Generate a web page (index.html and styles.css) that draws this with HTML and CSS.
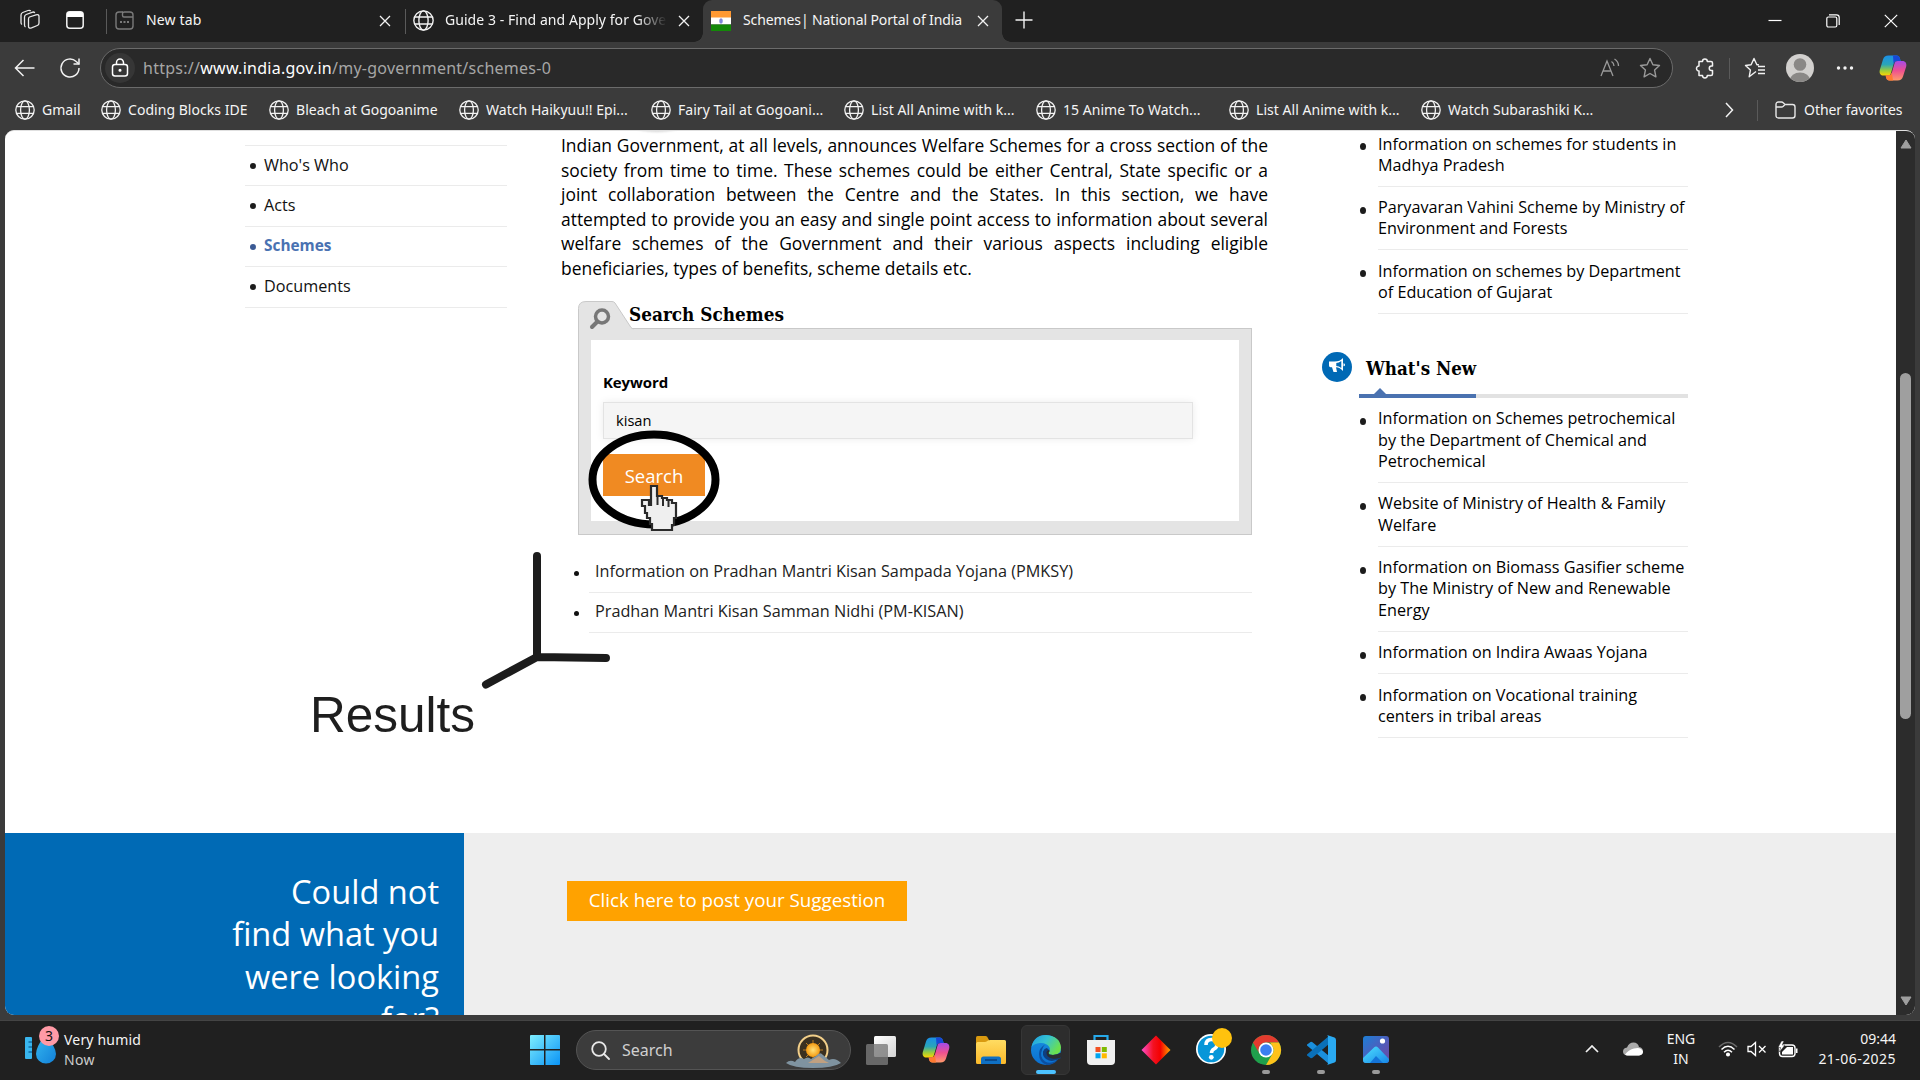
FILE: index.html
```html
<!DOCTYPE html>
<html lang="en">
<head>
<meta charset="utf-8">
<title>Schemes| National Portal of India</title>
<link rel="stylesheet" href="styles.css">
</head>
<body>
<svg class="defs" width="0" height="0">
  <defs>
    <linearGradient id="cpA" x1="0" y1="0" x2="0" y2="1"><stop offset="0" stop-color="#1b8fe8"/><stop offset=".45" stop-color="#2aa6b8"/><stop offset=".75" stop-color="#9ccc3c"/><stop offset="1" stop-color="#ffd500"/></linearGradient>
    <linearGradient id="cpB" x1="0" y1="0" x2="0" y2="1"><stop offset="0" stop-color="#a44bea"/><stop offset=".5" stop-color="#ee5090"/><stop offset="1" stop-color="#ff9a6a"/></linearGradient>
    <linearGradient id="edA" x1="0" y1="0" x2="1" y2=".5"><stop offset="0" stop-color="#1c9be0"/><stop offset=".5" stop-color="#35c3d2"/><stop offset="1" stop-color="#6be04e"/></linearGradient>
    <linearGradient id="edB" x1="0" y1="0" x2="0" y2="1"><stop offset="0" stop-color="#1890e0"/><stop offset="1" stop-color="#0b6fd0"/></linearGradient>
    <linearGradient id="diaG"><stop offset="0" stop-color="#ff4fd0"/><stop offset=".4" stop-color="#f31222"/><stop offset=".65" stop-color="#f50000"/><stop offset="1" stop-color="#ffa800"/></linearGradient>
    <linearGradient id="winG" x1="0" y1="0" x2="1" y2="1"><stop offset="0" stop-color="#7eeeff"/><stop offset="1" stop-color="#0a93f5"/></linearGradient>
    <linearGradient id="folG" x1="0" y1="0" x2="0" y2="1"><stop offset="0" stop-color="#ffdc62"/><stop offset="1" stop-color="#fbb92a"/></linearGradient>
    <linearGradient id="phG" x1="0" y1="0" x2="1" y2="1"><stop offset="0" stop-color="#1c7fd6"/><stop offset=".6" stop-color="#5559b8"/><stop offset="1" stop-color="#6a4aa0"/></linearGradient>
    <linearGradient id="phM" x1="0" y1="0" x2="1" y2="1"><stop offset="0" stop-color="#4fe0ff"/><stop offset="1" stop-color="#1787e8"/></linearGradient>
    <linearGradient id="drG" x1="0" y1="0" x2="1" y2="1"><stop offset="0" stop-color="#35b8f0"/><stop offset="1" stop-color="#1280d8"/></linearGradient>
    <radialGradient id="sunG"><stop offset="0" stop-color="#ffe27a"/><stop offset="1" stop-color="#f59a10"/></radialGradient>
    <linearGradient id="whG" x1="0" y1="0" x2="1" y2="1"><stop offset="0" stop-color="#fff"/><stop offset="1" stop-color="#d4d4d4"/></linearGradient>
    <symbol id="globe" viewBox="0 0 20 20"><g fill="none" stroke="#f2f2f2" stroke-width="1.3"><circle cx="10" cy="10" r="9.2"/><ellipse cx="10" cy="10" rx="4.4" ry="9.2"/><path d="M1.5 6.7h17M1.5 13.3h17"/></g></symbol>
    <symbol id="x" viewBox="0 0 12 12"><path d="M1 1l10 10M11 1L1 11" stroke="#f2f2f2" stroke-width="1.3"/></symbol>
    <symbol id="copilot" viewBox="0 0 28 28">
      <path d="M9.500 1.500h8c2 0 2.800 1 3.200 2.500l1 3h-3.500c-2 0-3 1-3.600 3l-2.600 9c-.6 2-1.600 2.600-3.200 2.600H4.600c-3 0-4.600-2.400-3.800-5.600L4 5.500c.8-2.500 2.500-4 5.500-4z" fill="url(#cpA)"/>
      <path d="M14 1.500h3.500c2 0 2.800 1 3.200 2.500l1 3h-3.500c-2 0-3 1-3.600 3z" fill="#1748d6"/>
      <path d="M18.500 26.500h-8c-2 0-2.800-1-3.200-2.500l-.7-2.500h2.700c2 0 3-1 3.600-3l2.600-9c.6-2 1.600-2.600 3.200-2.600h4.700c3 0 4.600 2.400 3.800 5.600L24 22.500c-.8 2.500-2.500 4-5.500 4z" fill="url(#cpB)"/>
      <path d="M14 26.500h-3.500c-2 0-2.800-1-3.200-2.500l-.7-2.500h2.700c2 0 3-1 3.600-3z" fill="#ff7a30"/>
    </symbol>
  </defs>
</svg>

<div class="screen">
  <header class="tabstrip">
    <div class="tab-tools">
      <svg width="22" height="22" viewBox="0 0 22 22" fill="none" stroke="#e8e8e8" stroke-width="1.3" stroke-linejoin="round"><path d="M10.500 8l6.500-2.200q3-.8 3 1.700v6.500q0 1.800-1.700 2.500l-5.800 2.300q-3 1-3-1.500V10q0-1.500 1-2z"/><path d="M6.500 18q-1-.5-1-2V8q0-1.800 1.700-2.500L13 3.300q2-.8 2.800.7"/><path d="M3 15.500q-1-.5-1-2V6q0-1.800 1.700-2.500L9 1.500q2-.6 2.700.6"/></svg>
      <svg width="18" height="18" viewBox="0 0 18 18"><rect x=".8" y=".8" width="16.400" height="16.400" rx="3" fill="none" stroke="#f2f2f2" stroke-width="1.500"/><path d="M1 6V3q0-2 2-2h12q2 0 2 2v3z" fill="#fff"/></svg>
    </div>
    <div class="tab tab-first">
      <svg width="19" height="19" viewBox="0 0 19 19" fill="none" stroke="#7a7a7a" stroke-width="1.400"><path d="M8 1H4Q1 1 1 4v11q0 3 3 3h11q3 0 3-3V6H9q-1.500 0-1.500-1.500V3Q7.500 1 9.500 1H15q3 0 3 3v2"/><path d="M5 11h2M8.500 11h2M12 11h2" stroke-width="2"/></svg>
      <span class="tab-label label-new">New tab</span>
      <svg class="close" width="12" height="12"><use href="#x"/></svg>
    </div>
    <div class="tab tab-guide">
      <svg width="21" height="21"><use href="#globe"/></svg>
      <span class="tab-label fade">Guide 3 - Find and Apply for Gove</span>
      <svg class="close" width="12" height="12"><use href="#x"/></svg>
    </div>
    <div class="tab tab-active">
      <svg width="20" height="20" viewBox="0 0 20 20"><path fill="#ff9933" d="M0 0h20v7H0z"/><path fill="#fff" d="M0 6.500h20v7H0z"/><path fill="#138808" d="M0 13.500h20V20H0z"/><ellipse cx="10" cy="10" rx="1.800" ry="2.800" fill="#7f86d8"/></svg>
      <span class="tab-label label-schemes">Schemes| National Portal of India</span>
      <svg class="close" width="12" height="12"><use href="#x"/></svg>
    </div>
    <svg class="plus" width="18" height="18" viewBox="0 0 18 18"><path d="M9 .5v17M.5 9h17" stroke="#f2f2f2" stroke-width="1.400"/></svg>
    <div class="window-controls">
      <svg width="14" height="14" viewBox="0 0 14 14"><path d="M.5 6.500h13" stroke="#fff" stroke-width="1.200"/></svg>
      <svg width="14" height="14" viewBox="0 0 14 14" fill="none" stroke="#fff" stroke-width="1.200"><rect x=".8" y="3" width="10" height="10" rx="1.500"/><path d="M3 .8h7.500q2.700 0 2.700 2.700V11"/></svg>
      <svg width="14" height="14" viewBox="0 0 14 14"><path d="M.8.8l12.400 12.400M13.200.8L.8 13.200" stroke="#fff" stroke-width="1.200"/></svg>
    </div>
  </header>

  <div class="toolbar">
    <svg class="back" width="21" height="18" viewBox="0 0 21 18" fill="none" stroke="#f2f2f2" stroke-width="1.500"><path d="M9.500 1L1.500 9l8 8M1.500 9H20.500"/></svg>
    <svg class="reload" width="22" height="22" viewBox="0 0 22 22" fill="none" stroke="#f2f2f2" stroke-width="1.500"><path d="M20 11a9 9 0 1 1-2.800-6.500L20 7"/><path d="M20 1.500V7h-5.500"/></svg>
    <div class="address">
      <span class="site-info"><svg width="18" height="20" viewBox="0 0 18 20" fill="none" stroke="#fff" stroke-width="1.500"><rect x="1.500" y="6.500" width="15" height="11.500" rx="2.500"/><path d="M5.500 6.500V4.500a3.500 3.500 0 0 1 7 0v2"/><circle cx="9" cy="12.200" r=".8" fill="#fff"/></svg></span>
      <span class="url">https://<b>www.india.gov.in</b>/my-government/schemes-0</span>
      <svg class="read" width="20" height="20" viewBox="0 0 20 20" fill="none" stroke="#9a9a9a" stroke-width="1.300"><path d="M1 18L7 3l6 15M3 13h8M11.500 3.500q2.500 1.500 2.500 4.500M14.500 1q4 2.500 4 7"/></svg>
      <svg class="star" width="22" height="22" viewBox="0 0 22 22" fill="none" stroke="#9a9a9a" stroke-width="1.400" stroke-linejoin="round"><path d="M11 1.500l2.900 6.200 6.600.8-4.900 4.600 1.300 6.700L11 16.500l-5.900 3.300 1.300-6.700L1.500 8.500l6.600-.8z"/></svg>
    </div>
    <svg class="ext" width="20" height="22" viewBox="0 0 20 22" fill="none" stroke="#f2f2f2" stroke-width="1.500" stroke-linejoin="round"><path d="M4 4.500h3.500a2.400 2.400 0 1 1 4.800 0H16q1.500 0 1.500 1.500v3h-1a2.200 2.200 0 1 0 0 4.500h1V17q0 1.500-1.500 1.500h-3.700a2.400 2.400 0 0 1-4.800 0H4V14a2.400 2.400 0 1 1 0-5z"/></svg>
    <i class="vline"></i>
    <svg class="favs" width="22" height="22" viewBox="0 0 22 22" fill="none" stroke="#f2f2f2" stroke-width="1.400" stroke-linejoin="round"><path d="M12 14.500l-6.800 5.300 1.200-6.700L1.500 8.500l5.600-.8L10 1.500l2.900 6.200h2M14 9.500h7M14 13h7M14 16.500h7"/></svg>
    <svg class="avatar" width="28" height="28" viewBox="0 0 28 28"><clipPath id="avc"><circle cx="14" cy="14" r="14"/></clipPath><g clip-path="url(#avc)"><path fill="#d2d0ce" d="M0 0h28v28H0z"/><circle cx="14" cy="10.500" r="6.300" fill="#8a8886"/><ellipse cx="14" cy="26" rx="10" ry="7.500" fill="#8a8886"/></g></svg>
    <svg class="dots" width="18" height="4" viewBox="0 0 18 4" fill="#f2f2f2"><circle cx="2.500" cy="2" r="1.700"/><circle cx="9" cy="2" r="1.700"/><circle cx="15.500" cy="2" r="1.700"/></svg>
    <svg class="cp" width="28" height="28"><use href="#copilot"/></svg>
  </div>

  <nav class="bookmarks">
    <a><svg width="20" height="20"><use href="#globe"/></svg>Gmail</a>
    <a><svg width="20" height="20"><use href="#globe"/></svg>Coding Blocks IDE</a>
    <a><svg width="20" height="20"><use href="#globe"/></svg>Bleach at Gogoanime</a>
    <a><svg width="20" height="20"><use href="#globe"/></svg>Watch Haikyuu!! Epi...</a>
    <a><svg width="20" height="20"><use href="#globe"/></svg>Fairy Tail at Gogoani...</a>
    <a><svg width="20" height="20"><use href="#globe"/></svg>List All Anime with k...</a>
    <a><svg width="20" height="20"><use href="#globe"/></svg>15 Anime To Watch...</a>
    <a><svg width="20" height="20"><use href="#globe"/></svg>List All Anime with k...</a>
    <a><svg width="20" height="20"><use href="#globe"/></svg>Watch Subarashiki K...</a>
    <svg class="more" width="9" height="16" viewBox="0 0 9 16" fill="none" stroke="#f2f2f2" stroke-width="1.500"><path d="M1 1l6.500 7L1 15"/></svg>
    <i class="vline"></i>
    <a class="other"><svg width="21" height="18" viewBox="0 0 21 18" fill="none" stroke="#e8e8e8" stroke-width="1.400"><path d="M1 5V3.500Q1 1 3.500 1h3q1 0 1.700.8L10 3.500h7.500Q20 3.500 20 6v8.500q0 2.500-2.500 2.500h-14Q1 17 1 14.500zM1 6h5.500q1 0 1.800-.8L10 3.500"/></svg>Other favorites</a>
  </nav>

  <main class="viewport">
    <div class="page">
      <i class="cutoff"></i>
      <div class="columns">
        <ul class="side-menu">
          <li>Who's Who</li>
          <li>Acts</li>
          <li class="current">Schemes</li>
          <li>Documents</li>
        </ul>
        <section class="content">
          <p class="intro">Indian Government, at all levels, announces Welfare Schemes for a cross section of the society from time to time. These schemes could be either Central, State specific or a joint collaboration between the Centre and the States. In this section, we have attempted to provide you an easy and single point access to information about several welfare schemes of the Government and their various aspects including eligible beneficiaries, types of benefits, scheme details etc.</p>
          <div class="search-box">
            <div class="search-head">
              <svg width="56" height="29" viewBox="0 0 56 29"><path d="M.5 29V7.500Q.5.500 8 .5h26q2 0 3 1.500L53 26.500q.8 1 2 1l1 1.500z" fill="#e4e4e4"/><path d="M.5 29V7.500Q.5.500 8 .5h26q2 0 3 1.500L53 26.500q.8 1.300 3 1.300" fill="none" stroke="#c9c9c9"/><circle cx="24" cy="15.500" r="6.500" fill="none" stroke="#777" stroke-width="3.500"/><path d="M19 21l-5 5" stroke="#777" stroke-width="4" stroke-linecap="round"/></svg>
              <h2>Search Schemes</h2>
            </div>
            <div class="search-frame">
              <div class="search-form">
                <label>Keyword</label>
                <div class="field">kisan</div>
                <div class="button">Search</div>
              </div>
            </div>
          </div>
          <ul class="results">
            <li>Information on Pradhan Mantri Kisan Sampada Yojana (PMKSY)</li>
            <li>Pradhan Mantri Kisan Samman Nidhi (PM-KISAN)</li>
          </ul>
        </section>
        <aside class="related">
          <ul class="links">
            <li>Information on schemes for students in Madhya Pradesh</li>
            <li>Paryavaran Vahini Scheme by Ministry of Environment and Forests</li>
            <li>Information on schemes by Department of Education of Gujarat</li>
          </ul>
          <div class="news-head">
            <svg width="30" height="30" viewBox="0 0 30 30"><circle cx="15" cy="15" r="15" fill="#0069b5"/><path d="M7 9.500h5.500Q18 9.500 21 6v13q-3-3.500-7-3.700l1 4.700h-3.500l-1.500-4.700H8.500Q7 15.300 7 13.500z" fill="#fff"/><path d="M19.300 9v7q-2.500-1.800-5-2v-3q2.500-.2 5-2z" fill="#0069b5"/><path d="M21.500 11.200a1.500 1.500 0 0 1 0 3z" fill="#fff"/></svg>
            <h2>What's New</h2>
          </div>
          <div class="news-rule"></div>
          <ul class="links news">
            <li>Information on Schemes petrochemical by the Department of Chemical and Petrochemical</li>
            <li>Website of Ministry of Health &amp; Family Welfare</li>
            <li>Information on Biomass Gasifier scheme by The Ministry of New and Renewable Energy</li>
            <li>Information on Indira Awaas Yojana</li>
            <li>Information on Vocational training centers in tribal areas</li>
          </ul>
        </aside>
      </div>
      <footer class="suggest">
        <div class="ask">Could not<br>find what you<br>were looking<br>for?</div>
        <div class="answer"><div class="suggest-button">Click here to post your Suggestion</div></div>
      </footer>
    </div>
    <div class="scrollbar">
      <svg width="12" height="10" viewBox="0 0 12 10"><path d="M6 1L11 9H1z" fill="#9f9f9f" stroke="#9f9f9f" stroke-linejoin="round"/></svg>
      <i class="thumb"></i>
      <svg class="down" width="12" height="10" viewBox="0 0 12 10"><path d="M6 9L1 1h10z" fill="#9f9f9f" stroke="#9f9f9f" stroke-linejoin="round"/></svg>
    </div>
  </main>

  <footer class="taskbar">
    <div class="weather">
      <svg width="38" height="40" viewBox="0 0 38 40"><rect x="0" y="12" width="7" height="22" rx="1" fill="#39b6ee"/><path d="M3.500 17H7M3.500 22H7M3.500 27H7" stroke="#116ea8" stroke-width="1.500"/><path d="M20 10q11 12 11 19a10 9.500 0 0 1-20 0q0-7 9-19z" fill="url(#drG)"/><circle cx="24" cy="11" r="10" fill="#ff9aa6"/></svg>
      <span class="badge">3</span>
      <div class="weather-text"><span class="w1">Very humid</span><span class="w2">Now</span></div>
    </div>
    <svg class="start" width="30" height="30" viewBox="0 0 30 30" fill="url(#winG)"><path d="M1 0h13v14H0V1q0-1 1-1zM15.500 0H29q1 0 1 1v13H15.500zM0 15.500h14V30H1q-1 0-1-1zM15.500 15.500H30V29q0 1-1 1H15.500z"/></svg>
    <div class="task-search">
      <svg width="19" height="19" viewBox="0 0 19 19" fill="none" stroke="#e8e8e8" stroke-width="1.800" stroke-linecap="round"><circle cx="8" cy="8" r="6.800"/><path d="M13 13l5 5"/></svg>
      <span>Search</span>
      <svg class="sunrise" width="56" height="34" viewBox="0 0 56 34"><circle cx="27" cy="16" r="14.500" fill="#3a3020" stroke="#f2cf8a" stroke-width="2"/><path d="M27 6v20M17 16h20M20 9l14 14M34 9l-14 14" stroke="#b87a20" stroke-width="1"/><circle cx="27" cy="16" r="7" fill="url(#sunG)"/><path d="M0 29q4-4 9-1 4-6 9-3 4-3 7 0l5-3q4-5 7-1l6 5q6-3 12 3-8 5-28 5T0 29z" fill="#7f93a0"/><path d="M22 29l11-7 6 5 4 2z" fill="#c0a080"/></svg>
    </div>
    <div class="apps">
      <div class="app"><svg width="32" height="32" viewBox="0 0 32 32"><rect x="9" y="2" width="22" height="21" rx="1.500" fill="url(#whG)"/><rect x="1" y="10" width="22" height="21" rx="1.500" fill="#7b7b7b" opacity=".8"/></svg></div>
      <div class="app"><svg width="28" height="28"><use href="#copilot"/></svg></div>
      <div class="app"><svg width="30" height="28" viewBox="0 0 30 28"><path d="M0 1.500Q0 0 1.500 0h8q1 0 1.700.8L13 4v5H0z" fill="#d99a10"/><path d="M0 8q0-1.500 1.500-2H9q1 0 2-.7l1-.8Q13 4 14 4h14.500Q30 4 30 5.500v21q0 1.500-1.500 1.500h-27Q0 28 0 26.500z" fill="url(#folG)"/><path d="M5 28v-5q0-2.500 2.500-2.500h15q2.500 0 2.500 2.500v5z" fill="#0f70c4"/><path d="M9 24h12" stroke="#0a3f7c" stroke-width="1.500"/></svg></div>
      <div class="app active"><svg width="32" height="32" viewBox="0 0 32 32"><circle cx="16" cy="16" r="15" fill="url(#edB)"/><path d="M1.500 13Q4 1 16 1q14 1 15 12.500 0 7.500-8 7.500-5 0-4.500-2.500 2.500-3 .5-6-3-4-9-3.500Q4 9.500 1.500 13z" fill="url(#edA)"/><path d="M12 16q-3 7 3 11.500 6 3.500 13.500-2.500Q24 31 16.500 31 9 28 9 20q0-6 6-9.500-2.500 2.500-3 5.500z" fill="#0c4fa0"/><path d="M18.500 18.500q-.5 2.500 4.500 2.500 4.500 0 6.500-2l1.500 5q-7 4-12 2.500-7-2.500-6-9 1-3 3.500-3.500 3.500 1 2 4.500z" fill="#0e3f80"/><path d="M18.500 18.500q-.5 2.500 4.500 2.500 5 0 9-3v5q-5 2.500-10 1.500-6-1.500-5.500-6.500 1-2 2.500-2 1.500 1-.5 2.500z" fill="#2b2d30"/></svg><i></i></div>
      <div class="app"><svg width="30" height="32" viewBox="0 0 30 32"><path d="M8.500 7V2h13v5" fill="none" stroke="#26a9ea" stroke-width="2.200"/><path d="M1 6h28v21q0 4-4 4H5q-4 0-4-4z" fill="#f0f0f0"/><path fill="#f25022" d="M9.500 13h5v5h-5z"/><path fill="#7fba00" d="M15.800 13h5v5h-5z"/><path fill="#00a4ef" d="M9.500 19.300h5v5h-5z"/><path fill="#ffb900" d="M15.800 19.300h5v5h-5z"/></svg></div>
      <div class="app"><svg width="30" height="30" viewBox="0 0 30 30"><path d="M15 .5L29.500 15 15 29.500.5 15z" fill="url(#diaG)"/></svg></div>
      <div class="app help"><svg width="38" height="38" viewBox="0 0 38 38"><circle cx="16" cy="22" r="15" fill="#fff"/><circle cx="16" cy="22" r="13.300" fill="#0796d8"/><path d="M11 18q0-5.500 5.500-5.500T22 17.500q0 3-3 4.500-2.500 1.500-2.500 4" fill="none" stroke="#fff" stroke-width="3.600"/><circle cx="16.300" cy="30.300" r="2.400" fill="#fff"/><circle cx="27" cy="11" r="10" fill="#ffc20e"/></svg></div>
      <div class="app running"><svg width="32" height="32" viewBox="0 0 32 32"><circle cx="16" cy="16" r="15" fill="#1fa04c"/><path d="M3 8.500A15 15 0 0 1 29 8.500H16a7.500 7.500 0 0 0-6.500 11.200z" fill="#e33b2e"/><path d="M29 8.500A15 15 0 0 1 16 31l6.500-11.300a7.500 7.500 0 0 0 0-7.500L20 8.500z" fill="#ffc21a"/><circle cx="16" cy="16" r="7.500" fill="#fff"/><circle cx="16" cy="16" r="5.800" fill="#3b7ff0"/></svg><i></i></div>
      <div class="app running"><svg width="32" height="32" viewBox="0 0 32 32"><path d="M3.500 9.500l2-1.500q1-.5 2 .3L24 22v8L2 11.500q-.7-1 1.500-2z" fill="#1a8fdc"/><path d="M3.500 22.500l2 1.500q1 .5 2-.3L24 10V2L2 20.500q-.7 1 1.500 2z" fill="#0a70b8"/><path d="M22 1l7.500 2.500Q31 4 31 6v20q0 2-1.500 2.500L22 31q1-.5 1-2V3q0-1.500-1-2z" fill="#2aaaf2"/></svg><i></i></div>
      <div class="app running"><svg width="28" height="30" viewBox="0 0 28 30"><rect x="1" y="1" width="26" height="27" rx="3" fill="url(#phG)"/><path d="M1 23L12 12.500q2-2 4 0L27 24v1q0 3-3 3H4q-3 0-3-3z" fill="url(#phM)"/><path d="M8 28l6-7 7 7z" fill="#1474d8"/><circle cx="20.500" cy="6" r="2.600" fill="#fff"/></svg><i></i></div>
    </div>
    <div class="tray">
      <svg class="chev" width="14" height="8" viewBox="0 0 14 8" fill="none" stroke="#f2f2f2" stroke-width="1.700"><path d="M1 7l6-6 6 6"/></svg>
      <svg class="cloud" width="20" height="14" viewBox="0 0 20 14"><path d="M4 13.500Q0 13 0 9.500 0 6 4 5.500 6 .5 10.500.5 15 .5 16 5q4 .5 4 4.500 0 3.500-4 4z" fill="#ababab"/><path d="M2 12.500q4-5 9-6 7-2 9 3 0 3.500-4 4H4.500Q3 13.500 2 12.500z" fill="#fff"/></svg>
      <div class="lang"><span>ENG</span><span>IN</span></div>
      <svg class="wifi" width="20" height="16" viewBox="0 0 20 16" fill="none" stroke="#fff" stroke-width="1.500"><path d="M1 6q9-9 18 0" stroke="#6a6a6a"/><path d="M3.500 8.500q6.500-6.500 13 0M6 11.200q4-4 8 0"/><circle cx="10" cy="13.500" r="1.300" fill="#fff"/></svg>
      <svg class="vol" width="20" height="16" viewBox="0 0 20 16" fill="none" stroke="#fff" stroke-width="1.300"><path d="M1 5.500h3L8.500 1.500v13L4 10.500H1z"/><path d="M12 5l6.500 6.500M18.500 5L12 11.500"/></svg>
      <svg class="batt" width="20" height="17" viewBox="0 0 20 17"><rect x="1.500" y="4" width="15.500" height="11.500" rx="3" fill="none" stroke="#fff" stroke-width="1.400"/><path d="M4 13.500V11l5-5h6v7.500z" fill="#fff"/><path d="M18 7.500h1.500v4.500H18z" fill="#fff"/><path d="M3.500 0L0 6.500h2.500L1.500 11 7 4H4.200L6 0z" fill="#fff" stroke="#202020" stroke-width=".5"/></svg>
      <div class="clock"><span>09:44</span><span class="date">21-06-2025</span></div>
    </div>
  </footer>

  <svg class="annotation" width="1920" height="1080" viewBox="0 0 1920 1080" fill="none">
    <ellipse cx="654" cy="479.500" rx="61.500" ry="45" stroke="#000" stroke-width="8"/>
    <path d="M537 556v101M537 657l69 1M537 657l-51 27.500" stroke="#1c1c1c" stroke-width="8" stroke-linecap="round"/>
    <path d="M652 486h5v10h5v2h5v2h5v3h4v15h-2v7h-2v5h-20v-6h-2v-6h-3v-5h-2v-7h-3v-6h7v5h2v-19z" fill="#efefef" stroke="#2a2a2a" stroke-width="2.200"/>
    <path d="M657.500 496v9M663 498v8M668.500 500v7" stroke="#2a2a2a" stroke-width="2"/>
  </svg>
  <div class="results-note">Results</div>
</div>
</body>
</html>
```
FILE: styles.css
```css
* { box-sizing: border-box; }
body { margin: 0; background: #202020; overflow: hidden; }
ul { list-style: none; margin: 0; padding: 0; }
h2, p { margin: 0; }
svg { display: block; flex: none; }
.defs { position: absolute; }

.screen {
  position: relative;
  display: flex;
  flex-direction: column;
  width: 1920px;
  height: 1080px;
  overflow: hidden;
  background: #3b3b3b;
  color: #f5f5f5;
  font: 14px/20px "Noto Sans", "Open Sans", sans-serif;
}

/* tab strip */
.tabstrip { display: flex; height: 42px; background: #202020; padding-left: 19px; flex: none; }
.tab-tools { display: flex; align-items: center; gap: 25px; width: 87px; height: 40px; }
.tab { display: flex; align-items: center; height: 41px; position: relative; white-space: nowrap; }
.tab .close { margin-left: auto; }
.tab-first { width: 299px; padding-left: 9px; padding-right: 14px; }
.tab-guide { width: 298px; padding: 0 13px 0 8px; }
.tab-first::before, .tab-guide::before { content: ""; position: absolute; left: 0; top: 9px; width: 1px; height: 25px; background: #5a5a5a; }
.tab-label { margin: 0 0 2px 12px; }
.label-new { letter-spacing: .15px; }
.fade { margin-left: 11px; width: 224px; letter-spacing: .05px; -webkit-mask-image: linear-gradient(90deg, #000 192px, transparent 222px); mask-image: linear-gradient(90deg, #000 192px, transparent 222px); }
.tab-active { width: 299px; height: 42px; padding: 0 13px 1px 8px; background: #3b3b3b; border-radius: 9px 9px 0 0; }
.tab-active::before, .tab-active::after { content: ""; position: absolute; bottom: 0; width: 9px; height: 9px; }
.tab-active::before { left: -9px; background: radial-gradient(circle at 0 0, #202020 8.5px, #3b3b3b 9px); }
.tab-active::after { right: -9px; background: radial-gradient(circle at 100% 0, #202020 8.5px, #3b3b3b 9px); }
.label-schemes { letter-spacing: -.11px; }
.plus { margin: 11px 0 0 13px; }
.window-controls { display: flex; gap: 44px; margin: 14px 22px 0 auto; }

/* toolbar */
.toolbar { display: flex; align-items: center; height: 52px; padding-left: 14px; flex: none; }
.reload { margin-left: 24px; }
.address { display: flex; align-items: center; width: 1573px; height: 40px; margin-left: 19px; padding-left: 4px; border: 1px solid #6b6b6b; border-radius: 20px; background: #292929; }
.site-info { display: flex; align-items: center; justify-content: center; width: 30px; height: 30px; border-radius: 50%; background: #363636; }
.url { margin-left: 8px; font-size: 16px; letter-spacing: .26px; color: #a6a6a6; }
.url b { color: #fff; font-weight: 400; }
.read { margin-left: auto; }
.star { margin: 0 11px 0 19px; }
.ext { margin-left: 22px; }
.vline { width: 1px; height: 21px; background: #5a5a5a; }
.toolbar .vline { margin: 0 14px 0 14px; }
.avatar { margin-left: 20px; }
.dots { margin-left: 22px; }
.cp { margin-left: 25px; }

/* bookmarks bar */
.bookmarks { display: grid; grid-template-columns: 86px 168px 190px 192px 193px 192px 193px 192px 304px 32px 18px auto; align-items: center; height: 36px; padding: 0 0 4px 15px; flex: none; white-space: nowrap; letter-spacing: .04px; }
.bookmarks a { display: flex; align-items: center; gap: 7px; }
.bookmarks .other { gap: 8px; letter-spacing: -.05px; }

/* viewport */
.viewport { display: flex; height: 885px; margin: 0 5px; flex: none; border-radius: 9px; overflow: hidden; background: #fff; border-top: 1px solid #e0e0e0; }
.page { position: relative; display: flex; flex-direction: column; width: 1891px; overflow: hidden; color: #111; font-family: "Open Sans", sans-serif; }
.cutoff { position: absolute; left: 625px; top: -16px; width: 54px; height: 17px; border-radius: 50%; background: #d8d8d8; filter: blur(1px); }
.columns { display: grid; grid-template-columns: 262px 707px 366px; column-gap: 54px; height: 702px; padding-left: 240px; flex: none; font-size: 16.200px; }

.side-menu { margin-top: 14px; border-top: 1px solid #ebebeb; align-self: start; }
.side-menu li { position: relative; height: 40.400px; line-height: 38px; padding-left: 19px; border-bottom: 1px solid #ebebeb; }
.side-menu li::before { content: ""; position: absolute; left: 5px; top: 17px; width: 6px; height: 6px; border-radius: 50%; background: #1c1c1c; }
.side-menu .current { color: #4a72b2; font-weight: 700; font-size: 15.400px; line-height: 37px; }
.side-menu .current::before { background: #3b5a94; }

.intro { margin-top: 2px; font-size: 17.450px; line-height: 24.500px; text-align: justify; color: #000; }
.search-box { width: 674px; margin: 21px 0 0 17px; }
.search-head { display: flex; height: 27px; }
.search-head h2 { margin: 2px 0 0 -5px; }
h2 { font: bold 18.800px/22px "DejaVu Serif Condensed", "DejaVu Serif", serif; color: #000; }
.search-frame { height: 207px; padding: 11px 12px 13px; background: #e4e4e4; border: 1px solid #c9c9c9; }
.search-head svg { position: relative; z-index: 1; }
.search-form { height: 181px; padding: 31px 12px; background: #fff; color: #000; }
.search-form label { display: block; font-size: 15px; font-weight: 700; letter-spacing: -.1px; line-height: 22px; }
.field { width: 590px; height: 37px; margin-top: 9px; padding-left: 12px; background: #f5f5f5; border: 1px solid #e3e3e3; box-shadow: 0 0 8px rgba(0,0,0,.08); font-size: 14.650px; line-height: 35px; }
.button { width: 102px; height: 42px; margin-top: 15px; background: #f08a22; color: #fff; font-size: 18.500px; line-height: 43px; text-align: center; }
.results { margin: 18px 0 0 28px; width: 663px; color: #222; }
.results li { position: relative; height: 40px; padding-left: 6px; line-height: 36px; border-bottom: 1px solid #ebebeb; font-size: 16.240px; }
.results li::before { content: ""; position: absolute; left: -15px; top: 18px; width: 5px; height: 5px; border-radius: 50%; background: #111; }

.related { position: relative; }
.links { margin-left: 56px; width: 310px; }
.related > .links:first-child { margin-top: -8px; }
.links li { position: relative; padding: 11px 0 10px; line-height: 21.200px; border-bottom: 1px solid #ebebeb; color: #000; }
.links li::before { content: ""; position: absolute; left: -18px; top: 20px; width: 6px; height: 7px; border-radius: 50%; background: #1c1c1c; }
.related > .links:first-child li { height: 63.600px; padding-top: 10.600px; }
.news li { padding: 10.700px 0 9.700px; }
.news-head { display: flex; margin-top: 38px; height: 42px; }
.news-head h2 { margin: 6px 0 0 14px; font-size: 18.600px; }
.news-rule { position: relative; width: 329px; height: 4px; margin-left: 37px; background: linear-gradient(90deg, #4a72b0 117px, #e2e2e2 117px); }
.news-rule::before { content: ""; position: absolute; left: 15px; top: -6px; border: solid transparent; border-width: 0 6px 6px; border-bottom-color: #4a72b0; }

.suggest { display: flex; height: 183px; }
.ask { width: 459px; padding: 38px 25px 0 0; background: #006ab5; color: #fff; font-size: 32.600px; line-height: 42.300px; text-align: right; }
.answer { flex: 1; padding: 48px 0 0 103px; background: #eee; }
.suggest-button { width: 340px; height: 40px; background: #ffa200; color: #fff; font-size: 18.750px; line-height: 38px; text-align: center; }

.scrollbar { display: flex; flex-direction: column; align-items: center; width: 19px; padding: 8px 0 9px; background: #2c2c2c; }
.thumb { width: 11px; height: 346px; margin-top: 224px; border-radius: 6px; background: #9f9f9f; }
.scrollbar .down { margin-top: auto; }

/* taskbar */
.taskbar { position: relative; display: flex; align-items: center; margin-top: 5px; padding-bottom: 1px; background: #202020; border-top: 1px solid #444; flex: 1; }
.weather { position: relative; display: flex; width: 530px; flex: none; padding-left: 25px; margin-top: -5px; }
.badge { position: absolute; left: 39px; top: 1px; width: 20px; text-align: center; color: #111; }
.weather-text { display: flex; flex-direction: column; margin: 5px 0 0 1px; line-height: 20px; }
.w1 { letter-spacing: .18px; }
.w2 { color: #ccc; letter-spacing: .39px; }
.start + .task-search { margin-left: 16px; }
.task-search { display: flex; align-items: center; width: 275px; height: 40px; flex: none; padding-left: 14px; border-radius: 20px; background: #3c3c3c; border: 1px solid #545454; font-size: 16px; color: #d0d0d0; }
.task-search span { margin-left: 12px; }
.sunrise { margin: 1px 8px 0 auto; }
.apps { display: flex; gap: 6px; margin-left: 5px; }
.app { position: relative; display: flex; align-items: center; justify-content: center; width: 49px; height: 50px; }
.app.active { background: #2d2d2d; border: 1px solid #363636; border-radius: 6px; }
.app i { position: absolute; left: 50%; bottom: 1px; height: 4px; width: 8px; margin-left: -4px; border-radius: 2px; background: #9a9a9a; }
.app.active i { bottom: 0; width: 20px; margin-left: -10px; background: #4cc2ff; }
.help svg { margin: -8px 0 0 6px; }
.tray { display: flex; align-items: center; margin: -2px 24px 0 auto; }
.cloud { margin-left: 24px; }
.lang { display: flex; flex-direction: column; align-items: center; width: 30px; margin-left: 23px; line-height: 20px; }
.wifi { margin-left: 22px; }
.vol { margin-left: 9px; }
.batt { margin-left: 11px; }
.clock { display: flex; flex-direction: column; align-items: flex-end; width: 98px; line-height: 20px; }
.date { letter-spacing: .45px; }

/* drawn over the page */
.annotation { position: absolute; inset: 0; }
.results-note { position: absolute; left: 310px; top: 686px; color: #1e1e1e; font: 49.500px/58px "Liberation Sans", Arial, sans-serif; }
```
